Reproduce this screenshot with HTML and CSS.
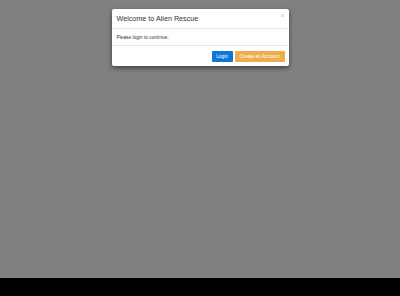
FILE: index.html
```html
<!DOCTYPE html>
<html>
<head>
<meta charset="utf-8">
<link rel="stylesheet" href="styles.css">
</head>
<body>
<div class="backdrop">
  <div class="modal">
    <div class="modal-header">
      <h4 class="modal-title">Welcome to Alien Rescue</h4>
      <span class="close">×</span>
    </div>
    <div class="modal-body">Please login to continue.</div>
    <div class="modal-footer">
      <button class="btn btn-primary">Login</button>
      <button class="btn btn-warning">Create an Account</button>
    </div>
  </div>
</div>
</body>
</html>
```
FILE: styles.css
```css
html { background: #000; }
body {
  margin: 0;
  font-family: "Liberation Sans", Arial, sans-serif;
  color: #333;
}
.backdrop {
  height: 278px;
  background: #808080;
  padding-top: 9px;
  box-sizing: border-box;
}
.modal {
  width: 177px;
  margin: 0 auto;
  background: #fff;
  border-radius: 2px;
  box-shadow: 0 2px 5px rgba(0,0,0,0.5);
}
.modal-header {
  height: 20px;
  box-sizing: border-box;
  border-bottom: 1px solid #e5e5e5;
  display: flex;
  align-items: center;
  justify-content: space-between;
  padding: 1px 5px 0 5px;
}
.modal-title {
  margin: 0;
  font-size: 7.2px;
  font-weight: normal;
  line-height: 1;
  color: #333;
}
.close {
  font-size: 7px;
  color: #c8c8c8;
  line-height: 1;
  align-self: flex-start;
  margin-top: 2px;
  margin-right: -1px;
}
.modal-body {
  height: 17px;
  box-sizing: border-box;
  padding: 0 5px;
  display: flex;
  align-items: center;
  font-size: 4.8px;
  border-bottom: 1px solid #e5e5e5;
}
.modal-footer {
  height: 20px;
  box-sizing: border-box;
  display: flex;
  justify-content: flex-end;
  align-items: center;
  gap: 2px;
  padding: 0 4px;
}
.btn {
  height: 11px;
  border: none;
  border-radius: 1px;
  color: #fff;
  font-family: "Liberation Sans", Arial, sans-serif;
  font-size: 4.8px;
  padding: 0;
  margin: 0;
}
.btn-primary {
  width: 21px;
  background: #0b78d6;
}
.btn-warning {
  width: 50px;
  background: #f0ad4e;
}
```
